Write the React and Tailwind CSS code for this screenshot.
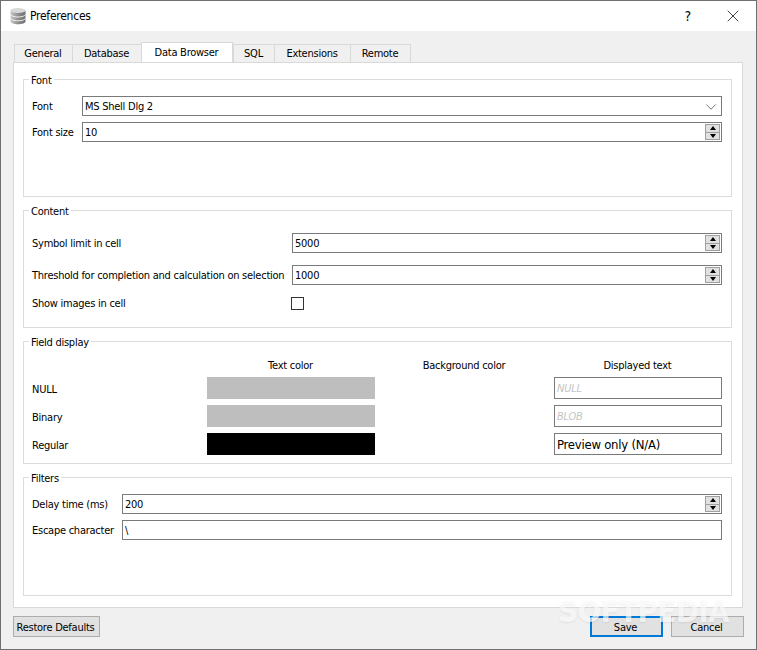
import React from 'react';
import { ChevronDown, X } from 'lucide-react';

const TABS = ['General', 'Database', 'Data Browser', 'SQL', 'Extensions', 'Remote'];
const TAB_WIDTHS = {
  General: 'w-[58px]',
  Database: 'w-[69px]',
  'Data Browser': 'w-[92px]',
  SQL: 'w-[41px]',
  Extensions: 'w-[76px]',
  Remote: 'w-[61px]',
};

function DbIcon() {
  return (
    <svg width="18" height="18" viewBox="0 0 18 18" className="shrink-0">
      <defs>
        <linearGradient id="db" x1="0" x2="1" y1="0" y2="0">
          <stop offset="0" stopColor="#c9c9c9" />
          <stop offset="0.5" stopColor="#8f8f8f" />
          <stop offset="1" stopColor="#6e6e6e" />
        </linearGradient>
      </defs>
      <path d="M1.5 3.5v11c0 1.6 3.4 2.8 7.5 2.8s7.5-1.2 7.5-2.8v-11z" fill="url(#db)" />
      <ellipse cx="9" cy="3.5" rx="7.5" ry="2.6" fill="#d8d8d8" />
      <path d="M1.5 7.2c0 1.6 3.4 2.8 7.5 2.8s7.5-1.2 7.5-2.8M1.5 11c0 1.6 3.4 2.8 7.5 2.8s7.5-1.2 7.5-2.8" fill="none" stroke="#f2f2f2" strokeWidth="1" />
    </svg>
  );
}

function Group({ title, className, children }) {
  return (
    <section className={`relative border border-[#dcdcdc] ${className}`}>
      <span className="absolute left-[5px] top-[-6px] bg-white px-[2px] leading-[14px]">{title}</span>
      {children}
    </section>
  );
}

function Spinner() {
  return (
    <div className="absolute right-[1px] top-[1px] bottom-[1px] flex w-[15px] flex-col border border-[#a0a0a0] bg-[#e1e1e1]">
      <div className="flex flex-1 items-center justify-center border-b border-[#a0a0a0]">
        <div className="h-0 w-0 border-x-[3.5px] border-b-[4px] border-x-transparent border-b-black" />
      </div>
      <div className="flex flex-1 items-center justify-center">
        <div className="h-0 w-0 border-x-[3.5px] border-t-[4px] border-x-transparent border-t-black" />
      </div>
    </div>
  );
}

function Field({ value, spin, className = '', children }) {
  return (
    <div className={`relative flex h-[20px] items-center border border-[#7a7a7a] bg-white pl-[2px] pt-[2px] ${className}`}>
      {value}
      {spin && <Spinner />}
      {children}
    </div>
  );
}

function Btn({ label, className = '' }) {
  return (
    <button className={`h-[21px] bg-[#e1e1e1] pr-[2px] pt-[2px] text-center leading-[16px] ${className}`}>
      {label}
    </button>
  );
}

export default function App() {
  return (
    <div className="relative flex h-[650px] w-[757px] flex-col border border-[#6f6f6f] bg-[#f0f0f0] font-['DejaVu_Sans_Condensed','DejaVu_Sans',sans-serif] text-[11px] tracking-[-0.25px] text-black [font-stretch:condensed]">
      <header className="flex h-[30px] shrink-0 items-center bg-white pl-[8px]">
        <DbIcon />
        <span className="ml-[3px] text-[12px]">Preferences</span>
        <span className="ml-auto mr-[32px] text-[14px]">?</span>
        <X size={20} strokeWidth={0.9} className="mr-[13px]" />
      </header>

      <div className="flex flex-1 flex-col pl-[12px] pr-[12px]">
        <nav className="mt-[12px] flex h-[19px] items-end pl-px">
          {TABS.map(tab => (
            <div
              key={tab}
              className={
                tab === 'Data Browser'
                  ? `relative z-10 flex h-[20px] items-center justify-center border border-b-0 border-[#d9d9d9] bg-white pr-px pt-[2px] ${TAB_WIDTHS[tab]}`
                  : `flex h-[18px] items-center justify-center border border-b-0 border-r-0 border-[#d9d9d9] bg-[#f0f0f0] pr-px pt-[2px] last:border-r ${TAB_WIDTHS[tab]}`
              }
            >
              {tab}
            </div>
          ))}
        </nav>

        <main className="mr-px flex h-[546px] flex-col gap-[13px] border border-[#d9d9d9] bg-white pl-[9px] pr-[10px] pt-[16px]">
          <Group title="Font" className="h-[118px] shrink-0">
            <div className="flex flex-col gap-[6px] pl-[8px] pr-[9px] pt-[16px]">
              <div className="flex items-center">
                <span className="w-[50px] pt-[2px]">Font</span>
                <Field value="MS Shell Dlg 2" className="flex-1">
                  <ChevronDown size={18} strokeWidth={0.9} className="absolute right-[1px] top-px text-[#333]" />
                </Field>
              </div>
              <div className="flex items-center">
                <span className="w-[50px] pt-[2px]">Font size</span>
                <Field value="10" spin className="flex-1" />
              </div>
            </div>
          </Group>

          <Group title="Content" className="h-[118px] shrink-0">
            <div className="flex flex-col pl-[8px] pr-[9px] pt-[22px]">
              <div className="flex h-[20px] items-center">
                <span className="w-[260px] pt-[3px]">Symbol limit in cell</span>
                <Field value="5000" spin className="flex-1" />
              </div>
              <div className="mt-[12px] flex h-[20px] items-center">
                <span className="w-[260px] whitespace-nowrap pt-[3px]">Threshold for completion and calculation on selection</span>
                <Field value="1000" spin className="flex-1" />
              </div>
              <div className="mt-[11px] flex h-[16px] items-center">
                <span className="w-[259px]">Show images in cell</span>
                <div className="mb-px h-[13px] w-[13px] border border-[#333] bg-white" />
              </div>
            </div>
          </Group>

          <Group title="Field display" className="h-[123px] shrink-0">
            <div className="grid grid-cols-[175px_168px_179px_168px] pl-[8px] pt-[17px]">
              <div />
              <div className="pr-px text-center leading-[14px]">Text color</div>
              <div className="pr-px text-center leading-[14px]">Background color</div>
              <div className="pr-px text-center leading-[14px]">Displayed text</div>
              <div className="mt-[4px] flex h-[22px] items-center pt-[4px]">NULL</div>
              <div className="mt-[4px] h-[22px] bg-[#bebebe]" />
              <div />
              <Field value="NULL" className="mt-[4px] h-[22px] italic text-[#c4c4c4]" />
              <div className="mt-[6px] flex h-[22px] items-center pt-[4px]">Binary</div>
              <div className="mt-[6px] h-[22px] bg-[#bebebe]" />
              <div />
              <Field value="BLOB" className="mt-[6px] h-[22px] italic text-[#c4c4c4]" />
              <div className="mt-[6px] flex h-[22px] items-center pt-[4px]">Regular</div>
              <div className="mt-[6px] h-[22px] bg-black" />
              <div />
              <Field value="Preview only (N/A)" className="mt-[6px] h-[22px] text-[13px]" />
            </div>
          </Group>

          <Group title="Filters" className="h-[119px] shrink-0">
            <div className="flex flex-col gap-[6px] pl-[8px] pr-[9px] pt-[16px]">
              <div className="flex items-center">
                <span className="w-[90px] pt-[2px]">Delay time (ms)</span>
                <Field value="200" spin className="flex-1" />
              </div>
              <div className="flex items-center">
                <span className="w-[90px] pt-[2px]">Escape character</span>
                <Field value="\" className="flex-1" />
              </div>
            </div>
          </Group>
        </main>

        <footer className="mt-[8px] flex items-start">
          <Btn label="Restore Defaults" className="w-[87px] border border-[#adadad]" />
          <Btn label="Save" className="ml-auto w-[73px] border-2 border-[#0078d7]" />
          <Btn label="Cancel" className="ml-[8px] w-[73px] border border-[#adadad]" />
        </footer>
      </div>

      <div className="pointer-events-none absolute left-[557px] top-[590px] text-[31px] font-bold leading-[40px] tracking-[-0.6px] text-white/70 [text-shadow:0_1px_2px_rgba(0,0,0,0.07)]">
        SOFTPEDIA
      </div>
    </div>
  );
}
